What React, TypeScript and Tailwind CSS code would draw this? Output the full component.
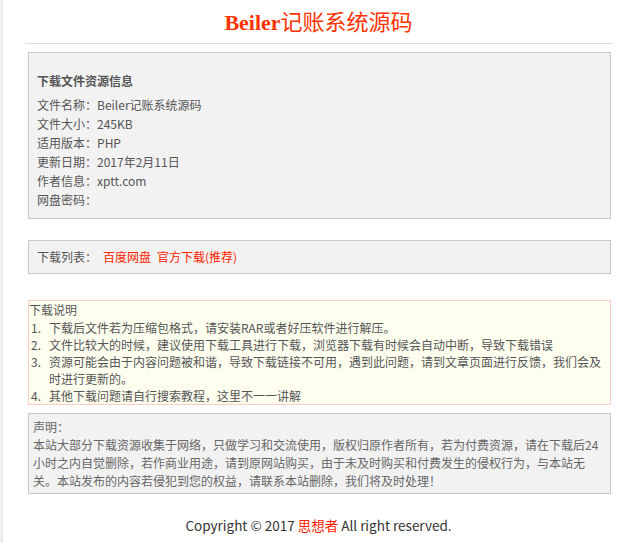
const FONT = { fontFamily: '"Segoe UI", "Noto Sans CJK SC", sans-serif' };

const infoRows: [string, string][] = [
  ['文件名称', 'Beiler记账系统源码'],
  ['文件大小', '245KB'],
  ['适用版本', 'PHP'],
  ['更新日期', '2017年2月11日'],
  ['作者信息', 'xptt.com'],
  ['网盘密码', ''],
];

const notes = [
  '下载后文件若为压缩包格式，请安装RAR或者好压软件进行解压。',
  '文件比较大的时候，建议使用下载工具进行下载，浏览器下载有时候会自动中断，导致下载错误',
  '资源可能会由于内容问题被和谐，导致下载链接不可用，遇到此问题，请到文章页面进行反馈，我们会及时进行更新的。',
  '其他下载问题请自行搜索教程，这里不一一讲解',
];

export default function App() {
  return (
    <div className="min-h-screen bg-[#f0f0f0]" style={FONT}>
      <div className="ml-[2px] min-h-[543px] border-l border-[#e2e2e2] bg-white pl-[22px] pr-[25px]">
        {/* Title */}
        <h1 className="pt-[7px] pb-[7px] text-center text-[22px] leading-[26px] text-[#ff3300]">
          <span className="font-bold" style={{ fontFamily: '"Liberation Serif", serif' }}>
            Beiler
          </span>
          <span style={{ fontFamily: '"Noto Sans CJK SC", serif' }}>记账系统源码</span>
        </h1>
        <div className="border-t border-[#dcdcdc]" />

        <div className="ml-[3px] mr-[1px] text-[12px] text-[#555]">
          {/* File info */}
          <div className="mt-[8px] border border-[#c8c8c8] bg-[#f2f2f2] pl-[8px] pt-[18px] pb-[9px] leading-[19px]">
            <h3 className="mb-[5px] font-bold text-[#555]">下载文件资源信息</h3>
            {infoRows.map(([k, v]) => (
              <div key={k}>
                {k}：{v}
              </div>
            ))}
          </div>

          {/* Download list */}
          <div className="mt-[21px] flex h-[34px] items-center border border-[#c8c8c8] bg-[#f2f2f2] pl-[8px]">
            <span>下载列表：</span>
            <a className="ml-[6px] text-[#ff2200]">百度网盘</a>
            <a className="ml-[6px] text-[#ff2200]">官方下载(推荐)</a>
          </div>

          {/* Notes */}
          <div className="mt-[26px] border border-[#ffcccc] bg-[#fffff0] pr-[4px] text-[#555]">
            <div className="leading-[18px]">下载说明</div>
            <ol className="leading-[17px]">
              {notes.map((n, i) => (
                <li key={n} className="flex">
                  <span className="w-[20px] shrink-0 pl-[2px]">{i + 1}.</span>
                  <span>{n}</span>
                </li>
              ))}
            </ol>
          </div>

          {/* Disclaimer */}
          <div className="mt-[8px] border border-[#c8c8c8] bg-[#f2f2f2] pl-[4px] pr-[5px] pt-[4px] pb-[3px] leading-[18px] text-[#666]">
            <div>声明：</div>
            <p>
              本站大部分下载资源收集于网络，只做学习和交流使用，版权归原作者所有，若为付费资源，请在下载后24小时之内自觉删除，若作商业用途，请到原网站购买，由于未及时购买和付费发生的侵权行为，与本站无关。本站发布的内容若侵犯到您的权益，请联系本站删除，我们将及时处理！
            </p>
          </div>
        </div>

        {/* Footer */}
        <div className="pt-[21px] text-center text-[13.5px] leading-[20px] text-[#333]">
          Copyright © 2017 <span className="text-[#ff2200]">思想者</span> All right reserved.
        </div>
      </div>
    </div>
  );
}
